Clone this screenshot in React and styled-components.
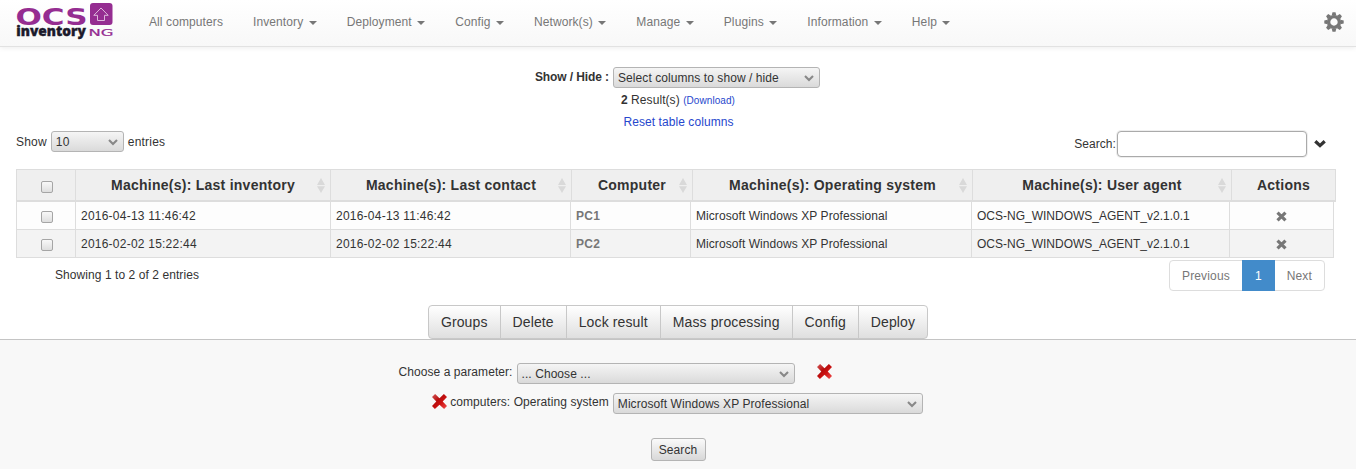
import React from 'react';
import styled, { createGlobalStyle, css } from 'styled-components';

const GlobalStyle = createGlobalStyle`
  *, *::before, *::after { box-sizing: border-box; }
  html, body { margin: 0; background: #fff; overflow: hidden; }
  body {
    font-family: 'Liberation Sans', Arial, sans-serif;
    font-size: 12px;
    line-height: 17px;
    letter-spacing: 0.07px;
    color: #333;
  }
`;

const Page = styled.div`
  display: flex;
  flex-direction: column;
  height: 469px;
`;

const Navbar = styled.header`
  flex: none;
  height: 47px;
  display: flex;
  padding: 0 12px 0 16px;
  border-bottom: 1px solid #e2e2e2;
  background: linear-gradient(#fff, #f8f8f8);
  box-shadow: 0 1px 5px rgba(0, 0, 0, 0.075);
`;

const Logo = styled.svg`
  flex: none;
  width: 98px;
  height: 40px;
  letter-spacing: 0;
`;

const Menu = styled.nav`
  flex: 1;
  display: flex;
  padding-left: 20px;
  letter-spacing: 0.1px;
`;

const MenuItem = styled.a`
  padding: 14px 15px 0;
  color: #777;
  white-space: pre;
`;

const Caret = styled.span`
  display: inline-block;
  margin-left: 2px;
  vertical-align: middle;
  border-top: 4px solid #777;
  border-left: 4px solid transparent;
  border-right: 4px solid transparent;
`;

const GearIcon = styled.svg`
  width: 20px;
  height: 20px;
  margin-top: 12px;
`;

const Columns = styled.section`
  flex: none;
  height: 84px;
  display: flex;
  flex-direction: column;
  align-items: center;
  padding-top: 20px;
`;

const Field = styled.div`
  display: flex;
  align-items: center;
  gap: 4px;
`;

const FieldTitle = styled.b`
  letter-spacing: -0.1px;
`;

const ColumnField = styled(Field)`
  padding-right: 1px;
`;

const FieldText = styled.span`
  padding-top: 2px;
`;

const Result = styled.div`
  margin-top: 4px;
`;

const Reset = styled.a`
  margin-top: 5px;
  padding-left: 1px;
  color: #2647cd;
`;

const Download = styled.a`
  font-size: 10px;
  color: #2647cd;
`;

const SelectBox = styled.div`
  width: ${(p) => p.$width}px;
  height: 21px;
  display: flex;
  align-items: center;
  justify-content: space-between;
  padding: 1px 5px 0 4px;
  border: 1px solid #b4b4b4;
  border-radius: 3px;
  background: linear-gradient(#f5f5f5, #dadada);
  white-space: nowrap;
`;

const Controls = styled.section`
  flex: none;
  height: 38px;
  display: flex;
  justify-content: space-between;
  align-items: flex-start;
  padding: 0 30px 0 16px;
`;

const LengthField = styled(Field)`
  letter-spacing: 0.2px;
`;

const SearchField = styled.label`
  display: flex;
  align-items: center;
`;

const SearchInput = styled.input`
  width: 190px;
  height: 26px;
  margin: 0 7px 0 1px;
  border: 1px solid #aaa;
  border-radius: 4px;
  background: #fff;
  box-shadow: 0 0 0 1px #eee;
`;

const Row = styled.div`
  flex: none;
  display: grid;
  margin-left: 16px;
  border-left: 1px solid #ddd;
  ${(p) =>
    p.$head
      ? css`
          width: 1320px;
          height: 33px;
          grid-template-columns: 59px 255px 241px 121px 280px 259px 104px;
          border-top: 1px solid #ddd;
          border-bottom: 2px solid #ddd;
          background: #efefef;
        `
      : css`
          width: 1318px;
          height: 28px;
          grid-template-columns: 59px 255px 240px 120px 281px 258px 104px;
          border-bottom: 1px solid #ddd;
          background: ${p.$striped ? '#f3f3f3' : '#fdfdfd'};
        `}
`;

const Cell = styled.div`
  display: flex;
  align-items: center;
  padding: 2px 5px 0;
  border-right: 1px solid #ddd;
  white-space: nowrap;
  ${(p) => p.$center && css`justify-content: center;`}
`;

const HeadCell = styled(Cell)`
  padding: 0 5px;
  font-size: 14px;
  font-weight: bold;
  letter-spacing: 0.25px;
`;

const HeadLabel = styled.span`
  flex: 1;
  padding-left: ${(p) => (p.$sortable ? 8 : 0)}px;
  text-align: center;
`;

const DateText = styled.span`
  letter-spacing: 0.23px;
`;

const AgentText = styled.span`
  letter-spacing: 0;
`;

const MachineLink = styled.a`
  font-weight: bold;
  letter-spacing: 0.3px;
  color: #777;
`;

const Checkbox = styled.span.attrs({ role: 'checkbox', 'aria-checked': false })`
  width: 12px;
  height: 12px;
  margin: ${(p) => p.$top || 0}px 0 0 2px;
  border: 1px solid #a5a5a5;
  border-radius: 2px;
  background: linear-gradient(#f8f8f8, #dedede);
`;

const TableFooter = styled.footer`
  flex: none;
  height: 47px;
  display: flex;
  justify-content: space-between;
  align-items: flex-start;
  padding: 2px 31px 0 55px;
`;

const Info = styled.span`
  padding-top: 7px;
`;

const Pagination = styled.div`
  display: flex;
  height: 31px;
  border: 1px solid #ddd;
  border-radius: 4px;
  letter-spacing: 0.15px;
`;

const PageLink = styled.a`
  padding: 7px 12px 0;
  color: #777;
  ${(p) =>
    p.$active &&
    css`
      margin: -1px 0;
      padding: 8px 13px 0;
      background: #428bca;
      color: #fff;
    `}
`;

const ActionBar = styled.div`
  flex: none;
  height: 34px;
  display: flex;
  justify-content: center;
`;

const ActionGroup = styled.div`
  display: flex;
  border: 1px solid #c8c8c8;
  border-radius: 4px;
  background: linear-gradient(#fff, #dfdfdf);
`;

const Action = styled.button`
  padding: 0 12px;
  border: 0;
  border-right: 1px solid #c8c8c8;
  background: none;
  font: 14px/32px 'Liberation Sans', Arial, sans-serif;
  letter-spacing: 0.12px;
  color: #333;
  &:last-child { border-right: 0; }
`;

const FilterPanel = styled.section`
  flex: 1;
  display: flex;
  flex-direction: column;
  align-items: center;
  padding-top: 23px;
  border-top: 1px solid #c4c4c4;
  background: #f8f8f8;
`;

const FilterRow = styled.div`
  display: flex;
  align-items: flex-start;
  height: 30px;
  ${(p) => p.$shift && css`margin-right: ${p.$shift}px;`}
`;

const FilterLabel = styled.span`
  margin: 1px 4px 0 0;
`;

const CrossIcon = styled.svg`
  width: 15px;
  height: 15px;
  margin: 1px 3px 0 ${(p) => p.$left || 0}px;
`;

const SearchButton = styled.button`
  width: 55px;
  height: 23px;
  margin-top: 15px;
  padding: 0;
  border: 1px solid #b4b4b4;
  border-radius: 3px;
  background: linear-gradient(#fafafa, #d8d8d8);
  font: 12px 'Liberation Sans', Arial, sans-serif;
  letter-spacing: 0.09px;
  color: #333;
`;

const Select = ({ width, children }) => (
  <SelectBox $width={width}>
    <span>{children}</span>
    <svg width="10" height="7" viewBox="0 0 10 7">
      <path d="M1 1l4 4 4-4" fill="none" stroke="#888" strokeWidth="2.1" />
    </svg>
  </SelectBox>
);

const SortIcon = () => (
  <svg width="8" height="15" viewBox="0 0 8 15">
    <path d="M0 7L4 0l4 7zM0 8.2h8L4 15z" fill="#d9d9d9" />
  </svg>
);

const RedCross = ({ left }) => (
  <CrossIcon $left={left} viewBox="0 0 15 15">
    <defs>
      <linearGradient id="cross" x1="0" y1="0" x2="1" y2="1">
        <stop offset="0" stopColor="#d45a5a" />
        <stop offset="0.4" stopColor="#b80d0d" />
        <stop offset="0.6" stopColor="#cc1212" />
        <stop offset="1" stopColor="#f25050" />
      </linearGradient>
    </defs>
    <path
      d="M3.1 0L7.5 4.2 11.9 0 15 2.9 10.7 7.4 15 12 12.1 15 7.5 10.8 2.9 15 0 12.1 4.3 7.5 0 2.9z"
      fill="url(#cross)"
    />
  </CrossIcon>
);

const RemoveIcon = () => (
  <svg width="11" height="11" viewBox="0 0 11 11">
    <path d="M1.5 1.6l8 7.8M9.5 1.6l-8 7.8" stroke="#777" strokeWidth="3.2" />
  </svg>
);

const Gear = () => (
  <GearIcon viewBox="-10 -10 20 20">
    <circle r="5.4" fill="none" stroke="#777" strokeWidth="3.4" />
    {[0, 45, 90, 135, 180, 225, 270, 315].map((a) => (
      <path key={a} d="M-2.3-6.5L-1.5-9.7h3l.8 3.2z" fill="#777" transform={`rotate(${a})`} />
    ))}
  </GearIcon>
);

const MENUS = ['Inventory', 'Deployment', 'Config', 'Network(s)', 'Manage', 'Plugins', 'Information', 'Help'];
const HEADINGS = ['Last inventory', 'Last contact', null, 'Operating system', 'User agent'];
const MACHINES = [
  { name: 'PC1', date: '2016-04-13 11:46:42' },
  { name: 'PC2', date: '2016-02-02 15:22:44' },
];
const ACTIONS = ['Groups', 'Delete', 'Lock result', 'Mass processing', 'Config', 'Deploy'];

export default function App() {
  return (
    <Page>
      <GlobalStyle />
      <Navbar>
        <Logo viewBox="0 0 98 40">
          <text x="-0.5" y="25.3" textLength="72" lengthAdjust="spacingAndGlyphs" fontFamily="DejaVu Sans" fontWeight="bold" fontSize="22.5" fill="#952d91">OCS</text>
          <rect x="74" y="3" width="22.5" height="22" rx="3" fill="#952d91" />
          <path d="M85 8l7.2 7.3h-3.7v5.2h-7v-5.2h-3.7z" fill="none" stroke="#dcb8db" strokeWidth="1" />
          <text x="0.3" y="35.8" textLength="69.5" lengthAdjust="spacingAndGlyphs" fontFamily="Open Sans" fontWeight="800" fontSize="14" fill="#1c1a2b" stroke="#1c1a2b" strokeWidth="0.4">inventory</text>
          <text x="72.5" y="35.8" textLength="25" lengthAdjust="spacingAndGlyphs" fontFamily="DejaVu Sans" fontSize="9.5" fill="#952d91" stroke="#952d91" strokeWidth="0.2">NG</text>
        </Logo>
        <Menu>
          <MenuItem>All computers</MenuItem>
          {MENUS.map((label) => (
            <MenuItem key={label}>{label} <Caret /></MenuItem>
          ))}
        </Menu>
        <Gear />
      </Navbar>

      <Columns>
        <ColumnField>
          <FieldTitle>Show / Hide :</FieldTitle>
          <Select width={207}>Select columns to show / hide</Select>
        </ColumnField>
        <Result><b>2</b> Result(s) <Download>(Download)</Download></Result>
        <Reset>Reset table columns</Reset>
      </Columns>

      <Controls>
        <LengthField>
          <FieldText>Show</FieldText>
          <Select width={73}>10</Select>
          <FieldText>entries</FieldText>
        </LengthField>
        <SearchField>
          Search:
          <SearchInput />
          <svg width="12" height="9" viewBox="0 0 12 9">
            <path d="M1.3 1.3L6 5.6l4.7-4.3" fill="none" stroke="#333" strokeWidth="3.3" />
          </svg>
        </SearchField>
      </Controls>

      <Row $head>
        <HeadCell $center><Checkbox $top={3} /></HeadCell>
        {HEADINGS.map((label) => (
          <HeadCell key={label || 'Computer'}>
            <HeadLabel $sortable>{label ? `Machine(s): ${label}` : 'Computer'}</HeadLabel>
            <SortIcon />
          </HeadCell>
        ))}
        <HeadCell><HeadLabel>Actions</HeadLabel></HeadCell>
      </Row>
      {MACHINES.map((machine, i) => (
        <Row key={machine.name} $striped={i % 2 === 1}>
          <Cell $center><Checkbox /></Cell>
          <Cell><DateText>{machine.date}</DateText></Cell>
          <Cell><DateText>{machine.date}</DateText></Cell>
          <Cell><MachineLink>{machine.name}</MachineLink></Cell>
          <Cell>Microsoft Windows XP Professional</Cell>
          <Cell><AgentText>OCS-NG_WINDOWS_AGENT_v2.1.0.1</AgentText></Cell>
          <Cell $center><RemoveIcon /></Cell>
        </Row>
      ))}

      <TableFooter>
        <Info>Showing 1 to 2 of 2 entries</Info>
        <Pagination>
          <PageLink>Previous</PageLink>
          <PageLink $active>1</PageLink>
          <PageLink>Next</PageLink>
        </Pagination>
      </TableFooter>

      <ActionBar>
        <ActionGroup>
          {ACTIONS.map((label) => <Action key={label}>{label}</Action>)}
        </ActionGroup>
      </ActionBar>

      <FilterPanel>
        <FilterRow $shift={123}>
          <FilterLabel>Choose a parameter:</FilterLabel>
          <Select width={278}>... Choose ...</Select>
          <RedCross left={22} />
        </FilterRow>
        <FilterRow $shift={1}>
          <RedCross />
          <FilterLabel>computers: Operating system</FilterLabel>
          <Select width={310}>Microsoft Windows XP Professional</Select>
        </FilterRow>
        <SearchButton>Search</SearchButton>
      </FilterPanel>
    </Page>
  );
}
